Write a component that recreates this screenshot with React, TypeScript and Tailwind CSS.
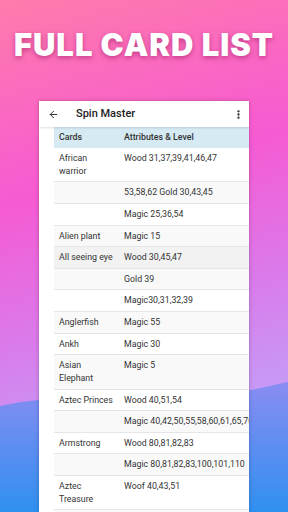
import { ArrowLeft, EllipsisVertical } from "lucide-react"

type Row = { card: string; attr: string }

const rows: Row[] = [
  { card: "African warrior", attr: "Wood 31,37,39,41,46,47" },
  { card: "", attr: "53,58,62 Gold 30,43,45" },
  { card: "", attr: "Magic 25,36,54" },
  { card: "Alien plant", attr: "Magic 15" },
  { card: "All seeing eye", attr: "Wood 30,45,47" },
  { card: "", attr: "Gold 39" },
  { card: "", attr: "Magic30,31,32,39" },
  { card: "Anglerfish", attr: "Magic 55" },
  { card: "Ankh", attr: "Magic 30" },
  { card: "Asian Elephant", attr: "Magic 5" },
  { card: "Aztec Princes", attr: "Wood 40,51,54" },
  { card: "", attr: "Magic 40,42,50,55,58,60,61,65,70" },
  { card: "Armstrong", attr: "Wood 80,81,82,83" },
  { card: "", attr: "Magic 80,81,82,83,100,101,110" },
  { card: "Aztec Treasure", attr: "Woof 40,43,51" },
  { card: "", attr: "" },
]

export default function App() {
  return (
    <div className="relative w-[288px] h-[512px] overflow-hidden bg-[linear-gradient(165deg,#ff7bab_0%,#f65ad3_35%,#d97ceb_60%,#c49df6_80%)] font-['Roboto',sans-serif]">
      {/* bottom wave */}
      <svg className="absolute left-0 bottom-0" width="288" height="150" viewBox="0 0 288 150">
        <defs>
          <linearGradient id="wave" x1="0" y1="0" x2="0" y2="1">
            <stop offset="0" stopColor="#8a8cf2" />
            <stop offset="1" stopColor="#2f90f0" />
          </linearGradient>
        </defs>
        <path d="M0 44 C40 34 120 32 180 38 C230 34 260 26 288 20 L288 150 L0 150 Z" fill="url(#wave)" />
      </svg>

      <div className="relative flex flex-col">
        <h1 className="h-[101px] flex items-center justify-center pb-[10px] text-white text-[31px] font-black tracking-[1px] font-['Inter',sans-serif] [text-shadow:0_2px_5px_rgba(150,20,90,0.55)]">
          FULL CARD LIST
        </h1>

        <div className="ml-[39px] w-[210px] h-[411px] bg-white shadow-[0_0_4px_rgba(0,0,0,0.25)] overflow-hidden">
          <div className="h-[26px] flex items-center px-[9px] text-[#222] shadow-[0_1px_2px_rgba(0,0,0,0.12)] relative">
            <ArrowLeft size={11} strokeWidth={2} />
            <span className="ml-[17px] text-[11px] font-medium">Spin Master</span>
            <EllipsisVertical size={11} strokeWidth={3} className="ml-auto -mr-[4px]" />
          </div>

          <div className="pl-[15px]">
            <div className="w-[240px] text-[8.8px] leading-[12.8px] text-[#333]">
              <div className="flex h-[21px] items-center bg-[#d6eaf4] font-medium">
                <div className="w-[70px] shrink-0 pl-[5px]">Cards</div>
                <div>Attributes &amp; Level</div>
              </div>
              {rows.map((r, i) => (
                <div
                  key={i}
                  className={
                    "flex border-b border-[#e6e6e6] " +
                    (i === 4 ? "bg-[#f2f2f2]" : i % 2 === 1 ? "bg-[#f9f9f9]" : "bg-white")
                  }
                >
                  <div className="w-[70px] shrink-0 pl-[5px] pr-[9px] pt-[4px] pb-[3.8px]">{r.card}</div>
                  <div className="whitespace-nowrap pt-[4px] pb-[3.8px]">{r.attr || "\u00a0"}</div>
                </div>
              ))}
            </div>
          </div>
        </div>
      </div>
    </div>
  )
}
